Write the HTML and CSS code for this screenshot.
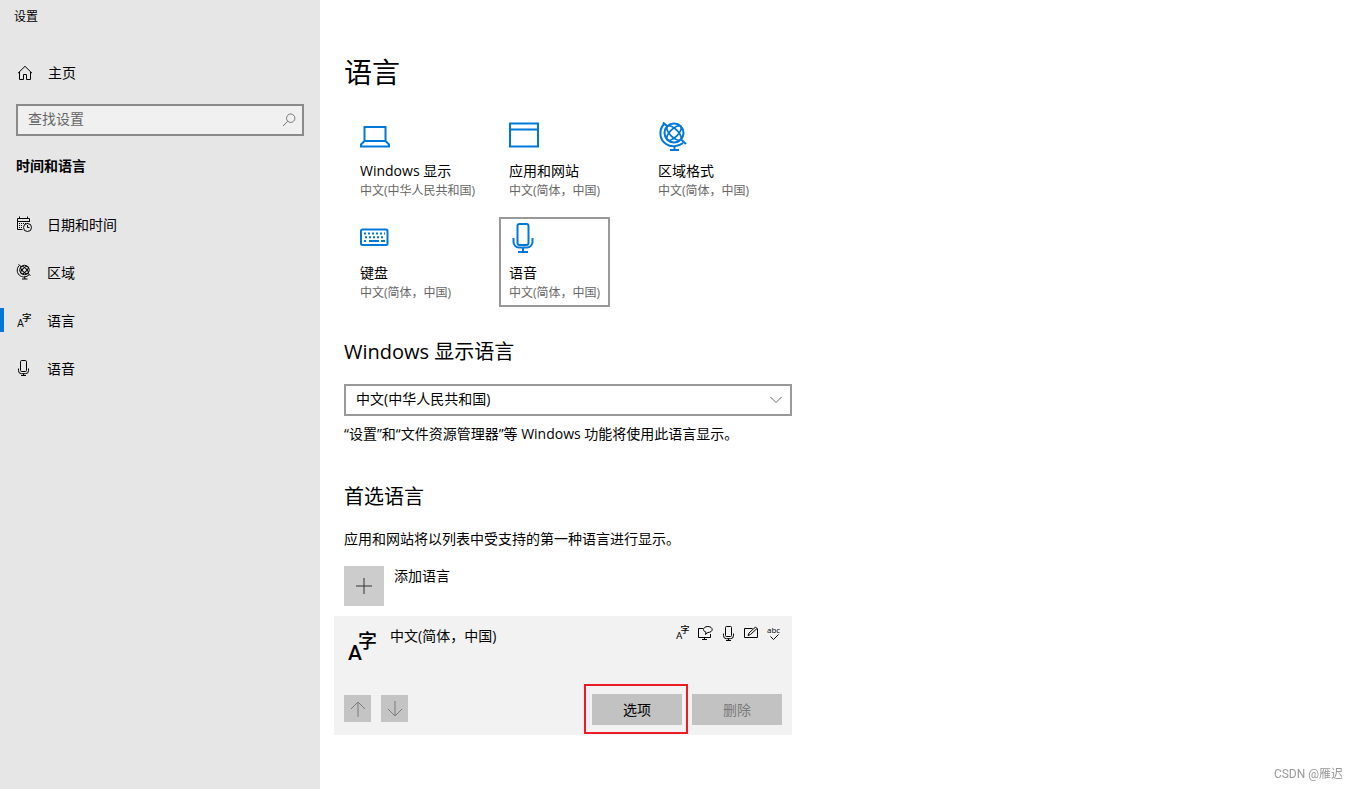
FILE: index.html
```html
<!DOCTYPE html>
<html lang="zh-CN">
<head>
<meta charset="utf-8">
<meta name="viewport" content="width=device-width, initial-scale=1">
<title>设置</title>
<link rel="stylesheet" href="styles.css">
</head>
<body>
<div class="app">
  <aside class="sidebar">
    <div class="window-title">设置</div>
    <a class="home" href="#">
      <svg class="icon" viewBox="0 0 16 16" aria-hidden="true"><path d="M1 8.200 8 1.300l7 6.900M2.500 7v7.500h4V9.500h3v5h4V7"/></svg>
      <span>主页</span>
    </a>
    <div class="search">
      <input class="search-input" type="text" placeholder="查找设置" aria-label="查找设置">
      <svg class="search-icon" viewBox="0 0 14 14" aria-hidden="true"><circle cx="8.700" cy="5.200" r="4.200"/><path d="M5.700 8.200 1 13"/></svg>
    </div>
    <h2 class="group-title">时间和语言</h2>
    <nav class="nav">
      <a class="nav-item" href="#">
        <svg class="icon" viewBox="0 0 16 16" aria-hidden="true"><path d="M13.500 6V2.500H1.500v11h5M1.500 5.500h12M3.500.500v2M11.500.500v2"/><path d="M3 7.500h9M3 9.500h4M3 11.500h4" stroke-dasharray="1 1"/><circle cx="11.500" cy="11.500" r="4"/><path d="M11.500 9v2.500h2"/></svg>
        <span>日期和时间</span>
      </a>
      <a class="nav-item" href="#">
        <svg class="icon" viewBox="0 0 32 32" aria-hidden="true"><g stroke-width="2"><circle cx="17" cy="12" r="9.500"/><path d="M5 1l5 4M24 19l5 4M6 3.500C0 10 2 20 9 24c5 3 12 2.500 17-2.500M17.500 25v5M12 30h11"/><ellipse cx="17" cy="12" rx="4" ry="9.500" transform="rotate(45 17 12)"/><ellipse cx="17" cy="12" rx="4" ry="9.500" transform="rotate(-45 17 12)"/></g></svg>
        <span>区域</span>
      </a>
      <a class="nav-item is-current" href="#" aria-current="page">
        <svg class="icon" viewBox="-1 -1 32 32" aria-hidden="true"><text class="glyph-a" x="1" y="29">A</text><text class="glyph-zi" x="11" y="17">字</text></svg>
        <span>语言</span>
      </a>
      <a class="nav-item" href="#">
        <svg class="icon" viewBox="1 0 16 16" aria-hidden="true"><rect x="5.500" y=".500" width="6" height="11" rx="1.200"/><path d="M3.500 8.500v2.200a3 3 0 0 0 3 3h4a3 3 0 0 0 3-3V8.500M8.500 13.700v1.800M6 15.500h5"/></svg>
        <span>语音</span>
      </a>
    </nav>
  </aside>

  <main class="content">
    <h1 class="page-title">语言</h1>
    <div class="tiles">
      <button class="tile" type="button">
        <svg class="tile-icon" viewBox="0 0 32 32" aria-hidden="true"><path d="M4.500 7h21v14h-21zM4.500 21 1 24.500V26.500h28v-2L25.500 21"/></svg>
        <span class="tile-name">Windows 显示</span>
        <span class="tile-value">中文(中华人民共和国)</span>
      </button>
      <button class="tile" type="button">
        <svg class="tile-icon" viewBox="0 0 32 32" aria-hidden="true"><path d="M1 3.500h28v23H1zM1 9.500h28"/></svg>
        <span class="tile-name">应用和网站</span>
        <span class="tile-value">中文(简体，中国)</span>
      </button>
      <button class="tile" type="button">
        <svg class="tile-icon" viewBox="0 0 32 32" aria-hidden="true"><circle cx="16" cy="13" r="9.500"/><path d="M5 2.500l4.500 4M22.500 19l5.500 5M6 4C0 11 2 20 8 24c5 3.500 12 3 17-1M16.500 26v4.500M12 30h9"/><g stroke-width="1.800"><ellipse cx="16" cy="13" rx="4" ry="9.500" transform="rotate(45 16 13)"/><ellipse cx="16" cy="13" rx="4" ry="9.500" transform="rotate(-45 16 13)"/></g></svg>
        <span class="tile-name">区域格式</span>
        <span class="tile-value">中文(简体，中国)</span>
      </button>
      <button class="tile" type="button">
        <svg class="tile-icon" viewBox="0 0 32 32" aria-hidden="true"><rect x="1" y="7.500" width="26.500" height="15.500" rx="1.500"/><g stroke-dasharray="2 2"><path d="M4 11.500h21M4 19h3"/><path d="M5 15.300h20"/></g><path d="M9 19h10M21 19h4"/></svg>
        <span class="tile-name">键盘</span>
        <span class="tile-value">中文(简体，中国)</span>
      </button>
      <button class="tile is-selected" type="button">
        <svg class="tile-icon" viewBox="0 0 32 32" aria-hidden="true"><rect x="8.500" y="2" width="11" height="21" rx="2"/><path d="M4.500 16v4a5.500 5.500 0 0 0 5.500 5.500h8a5.500 5.500 0 0 0 5.500-5.500v-4M14 25.500V30M9 30h10"/></svg>
        <span class="tile-name">语音</span>
        <span class="tile-value">中文(简体，中国)</span>
      </button>
    </div>

    <section class="display-language">
      <h2 class="section-title"><label for="display-language">Windows 显示语言</label></h2>
      <div class="select-box">
        <select class="select" id="display-language">
          <option>中文(中华人民共和国)</option>
        </select>
        <svg class="chevron" viewBox="0 0 12 8" aria-hidden="true"><path d="M.500 1 6 6.500 11.500 1"/></svg>
      </div>
      <p class="note">“设置”和“文件资源管理器”等 Windows 功能将使用此语言显示。</p>
    </section>

    <section class="preferred">
      <h2 class="section-title">首选语言</h2>
      <p class="intro">应用和网站将以列表中受支持的第一种语言进行显示。</p>
      <button class="add" type="button">
        <span class="add-box"><svg class="icon" viewBox="0 0 16 16" aria-hidden="true"><path d="M8 0v16M0 8h16"/></svg></span>
        <span>添加语言</span>
      </button>
      <div class="card">
        <div class="card-head">
          <svg class="lang-icon" viewBox="0 0 30 30" aria-hidden="true"><text class="glyph-a" x="0" y="29">A</text><text class="glyph-zi" x="10" y="17">字</text></svg>
          <span class="card-name">中文(简体，中国)</span>
          <span class="features">
            <svg class="icon" viewBox="-3 -1 34 34" aria-hidden="true"><text class="glyph-a" x="1" y="29">A</text><text class="glyph-zi" x="11" y="17">字</text></svg>
            <svg class="icon" viewBox="0 0 16 16" aria-hidden="true"><path d="M6 3.500H1.500v9h12V9M7.500 12.500v2M5 14.500h5"/><path d="M8.500 9.500 9 7.200C5 6 6 1.500 10.800 1.500c5.800 0 5.800 6 0 6z"/></svg>
            <svg class="icon" viewBox="0 0 16 16" aria-hidden="true"><rect x="5.500" y="1.500" width="6" height="10" rx="1"/><path d="M3.500 8.500v2.200a3 3 0 0 0 3 3h4a3 3 0 0 0 3-3V8.500M8.500 13.700v1.800M6 15.500h5"/></svg>
            <svg class="icon" viewBox="0 0 16 16" aria-hidden="true"><path d="M9.500 3.500h-8v9h13v-9M5 10.500l1-2.500 6.500-6L14 3.500 7.500 9.500z"/></svg>
            <svg class="icon" viewBox="0 0 16 16" aria-hidden="true"><text class="glyph-abc" x="1" y="8">abc</text><path d="M4.500 11.500 7.500 14.500 12.500 9.500"/></svg>
          </span>
        </div>
        <div class="card-actions">
          <button class="move" type="button" aria-label="上移" disabled><svg class="icon" viewBox="0 0 16 16" aria-hidden="true"><path d="M8 16V1M1 8l7-7 7 7"/></svg></button>
          <button class="move" type="button" aria-label="下移" disabled><svg class="icon" viewBox="0 0 16 16" aria-hidden="true"><path d="M8 0v15M1 8l7 7 7-7"/></svg></button>
          <span class="spacer"></span>
          <span class="marked"><button class="action" type="button">选项</button></span>
          <button class="action" type="button" disabled>删除</button>
        </div>
      </div>
    </section>
  </main>
</div>
<div class="watermark">CSDN @雁迟</div>
</body>
</html>
```
FILE: styles.css
```css
* {
  box-sizing: border-box;
}

body {
  margin: 0;
  background: #fff;
  color: #000;
  font: 14px/20px "Open Sans", "Noto Sans CJK SC", sans-serif;
}

h1, h2, p {
  margin: 0;
  font-weight: 400;
}

a {
  color: inherit;
  text-decoration: none;
}

button, input, select {
  margin: 0;
  padding: 0;
  border: 0;
  border-radius: 0;
  background: none;
  color: inherit;
  font: inherit;
  text-align: left;
}

svg {
  display: block;
  flex: none;
  overflow: visible;
  fill: none;
  stroke: currentColor;
}

svg text {
  fill: currentColor;
  stroke: none;
}

.glyph-a {
  font: 400 21px Roboto, sans-serif;
}

.glyph-zi {
  font: 500 19px "Noto Sans CJK SC", sans-serif;
}

.lang-icon .glyph-a {
  font-weight: 500;
}

.glyph-abc {
  font: 8px "Open Sans", sans-serif;
}

.icon {
  width: 16px;
  height: 16px;
}

.app {
  display: flex;
  min-height: 100vh;
}

/* Sidebar */
.sidebar {
  flex: none;
  width: 320px;
  background: #e6e6e6;
}

.window-title {
  padding: 1px 0 0 14px;
  font-size: 12px;
  line-height: 32px;
}

.home {
  display: flex;
  align-items: center;
  gap: 15px;
  height: 40px;
  margin: 20px 0 11px;
  padding-left: 17px;
}

.search {
  display: flex;
  align-items: center;
  height: 32px;
  margin: 0 16px;
  padding: 0 6px 0 10px;
  border: 2px solid #8a8a8a;
  background: #f0f0f0;
}

.search-input {
  flex: 1;
  min-width: 0;
  padding-bottom: 2px;
  outline: 0;
}

.search-input::placeholder {
  color: #666;
  opacity: 1;
}

.search-icon {
  width: 14px;
  height: 14px;
  color: #777;
}

.group-title {
  padding-left: 16px;
  font-size: 14px;
  font-weight: 700;
  line-height: 60px;
}

.nav {
  padding-top: 5px;
}

.nav-item {
  display: flex;
  align-items: center;
  gap: 15px;
  height: 48px;
  padding-left: 16px;
}

.nav-item .icon {
  margin-bottom: 2px;
}

.is-current {
  padding-left: 0;
}

.is-current::before {
  width: 4px;
  height: 24px;
  margin: 0 -3px 2px 0;
  background: #0078d7;
  content: "";
}

/* Content */
.content {
  flex: 1;
  max-width: 472px;
  padding: 52px 0 54px 24px;
}

.page-title {
  font-size: 28px;
  line-height: 40px;
}

.tiles {
  display: grid;
  grid-template-columns: repeat(auto-fill, 149px);
  justify-items: start;
  gap: 12px 0;
  margin: 23px -8px 31px 6px;
}

.tile {
  display: flex;
  flex-direction: column;
  padding: 3px 8px 2px;
  border: 2px solid transparent;
  white-space: nowrap;
}

.is-selected {
  border-color: #999;
}

.tile-icon {
  width: 32px;
  height: 32px;
  margin-bottom: 9px;
  color: #0078d7;
  stroke-width: 2;
}

.tile-value {
  color: #666;
  font-size: 12px;
}

.section-title {
  font-size: 20px;
  line-height: 28px;
}

.select-box {
  display: grid;
  align-items: center;
  margin: 18px 0 8px;
}

.select {
  grid-area: 1 / 1;
  width: 100%;
  height: 32px;
  padding: 0 32px 2px 10px;
  border: 2px solid #999;
  background: #fff;
  appearance: none;
}

.chevron {
  grid-area: 1 / 1;
  justify-self: end;
  width: 12px;
  height: 8px;
  margin-right: 10px;
  color: #666;
  pointer-events: none;
}

.preferred {
  margin-top: 39px;
}

.intro {
  margin: 18px 0 17px;
}

.add {
  display: flex;
  gap: 10px;
}

.add-box {
  display: grid;
  place-items: center;
  width: 40px;
  height: 40px;
  background: #ccc;
  color: #333;
}

.card {
  margin: 10px 0 0 -10px;
  padding: 10px;
  background: #f2f2f2;
}

.card-head {
  display: flex;
  height: 68px;
}

.lang-icon {
  width: 30px;
  height: 30px;
  margin: 5px 12px 0 4px;
}

.features {
  display: flex;
  gap: 7px;
  margin: -1px 0 0 auto;
}

.card-actions {
  display: flex;
  align-items: center;
  gap: 10px;
}

.move {
  display: grid;
  place-items: center;
  width: 27px;
  height: 27px;
  margin-bottom: 2px;
  background: #c4c4c4;
  color: #7a7a7a;
}

.spacer {
  flex: 1;
}

.action {
  width: 90px;
  height: 31px;
  background: #c2c2c2;
  text-align: center;
}

.action:disabled {
  color: #7a7a7a;
}

.marked {
  position: relative;
}

.marked .action {
  display: block;
}

.marked::after {
  position: absolute;
  inset: -10px -6px -9px -8px;
  border: 2px solid #ed1c24;
  content: "";
  pointer-events: none;
}

.watermark {
  position: fixed;
  right: 15px;
  bottom: 5px;
  color: #999;
  font: 12px/20px Roboto, "Noto Sans CJK SC", sans-serif;
}
```
